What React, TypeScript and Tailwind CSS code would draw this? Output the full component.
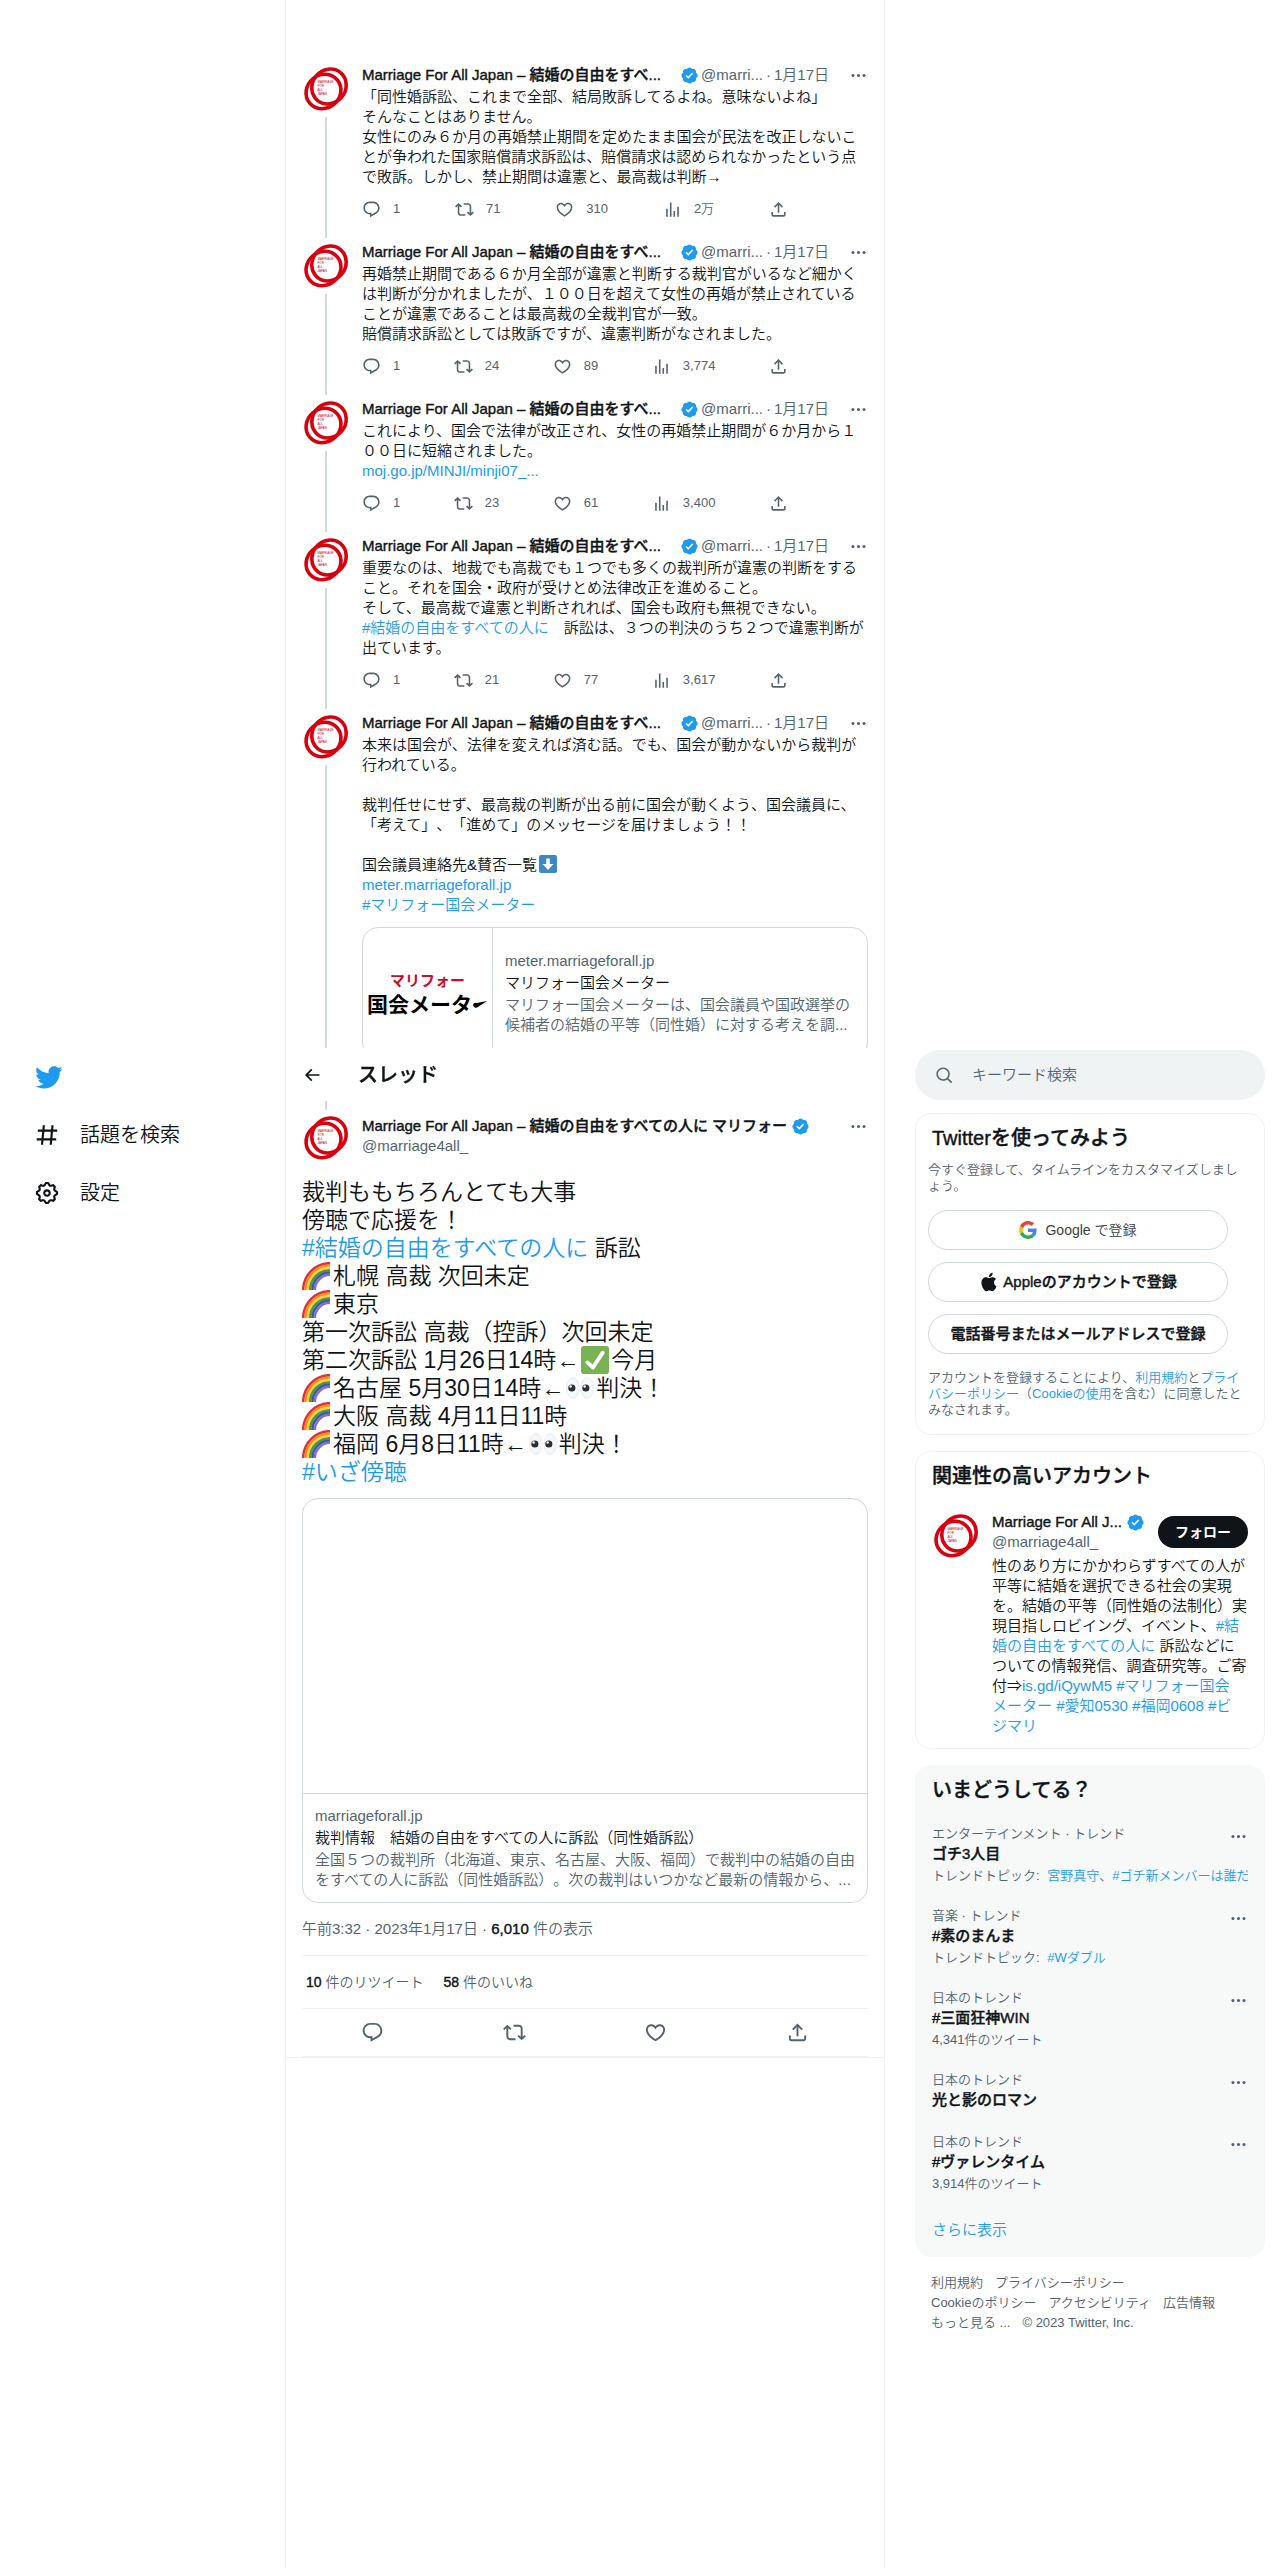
import type { ReactNode } from 'react';

interface IconProps {
  path: string;
  className?: string;
}

interface TweetData {
  body: ReactNode;
  replies: string;
  retweets: string;
  likes: string;
  views: string;
  card?: boolean;
}

interface Trend {
  category: string;
  title: string;
  count?: string;
  topics?: string[];
}

const paths = {
  reply:
    'M1.751 10c0-4.42 3.584-8 8.005-8h4.366c4.49 0 8.129 3.64 8.129 8.13 0 2.96-1.607 5.68-4.196 7.11l-8.054 4.46v-3.69h-.067c-4.49.1-8.183-3.51-8.183-8.01zm8.005-6c-3.317 0-6.005 2.69-6.005 6 0 3.37 2.77 6.08 6.138 6.01l.351-.01h1.761v2.3l5.087-2.81c1.951-1.08 3.163-3.13 3.163-5.36 0-3.39-2.744-6.13-6.129-6.13H9.756z',
  retweet:
    'M4.5 3.88l4.432 4.14-1.364 1.46L5.5 7.55V16c0 1.1.896 2 2 2H13v2H7.5c-2.209 0-4-1.79-4-4V7.55L1.432 9.48.068 8.02 4.5 3.88zM16.5 6H11V4h5.5c2.209 0 4 1.79 4 4v8.45l2.068-1.93 1.364 1.46-4.432 4.14-4.432-4.14 1.364-1.46 2.068 1.93V8c0-1.1-.896-2-2-2z',
  like:
    'M16.697 5.5c-1.222-.06-2.679.51-3.89 2.16l-.805 1.09-.806-1.09C9.984 6.01 8.526 5.44 7.304 5.5c-1.243.07-2.349.78-2.91 1.91-.552 1.12-.633 2.78.479 4.82 1.074 1.97 3.257 4.27 7.129 6.61 3.87-2.34 6.052-4.64 7.126-6.61 1.111-2.04 1.03-3.7.477-4.82-.561-1.13-1.666-1.84-2.908-1.91zm4.187 7.69c-1.351 2.48-4.001 5.12-8.379 7.67l-.503.3-.504-.3c-4.379-2.55-7.029-5.19-8.382-7.67-1.36-2.5-1.41-4.86-.514-6.67.887-1.79 2.647-2.91 4.601-3.01 1.651-.09 3.368.56 4.798 2.01 1.429-1.45 3.146-2.1 4.796-2.01 1.954.1 3.714 1.22 4.601 3.01.896 1.81.846 4.17-.514 6.67z',
  views: 'M8.75 21V3h2v18h-2zM18 21V8.5h2V21h-2zM4 21l.004-10h2L6 21H4zm9.248 0v-7h2v7h-2z',
  share:
    'M12 2.59l5.7 5.7-1.41 1.42L13 6.41V16h-2V6.41l-3.3 3.3-1.41-1.42L12 2.59zM21 15l-.02 3.51c0 1.38-1.12 2.49-2.5 2.49H5.5C4.11 21 3 19.88 3 18.5V15h2v3.5c0 .28.22.5.5.5h12.98c.28 0 .5-.22.5-.5L19 15h2z',
  more:
    'M3 12c0-1.1.9-2 2-2s2 .9 2 2-.9 2-2 2-2-.9-2-2zm9 2c1.1 0 2-.9 2-2s-.9-2-2-2-2 .9-2 2 .9 2 2 2zm7 0c1.1 0 2-.9 2-2s-.9-2-2-2-2 .9-2 2 .9 2 2 2z',
  back: 'M7.414 13l5.043 5.04-1.414 1.42L3.586 12l7.457-7.46 1.414 1.42L7.414 11H21v2H7.414z',
  search:
    'M10.25 3.75c-3.59 0-6.5 2.91-6.5 6.5s2.91 6.5 6.5 6.5c1.795 0 3.419-.726 4.596-1.904 1.178-1.177 1.904-2.801 1.904-4.596 0-3.59-2.91-6.5-6.5-6.5zm-8.5 6.5c0-4.694 3.806-8.5 8.5-8.5s8.5 3.806 8.5 8.5c0 1.986-.682 3.815-1.824 5.262l4.781 4.781-1.414 1.414-4.781-4.781c-1.447 1.142-3.276 1.824-5.262 1.824-4.694 0-8.5-3.806-8.5-8.5z',
  bird:
    'M23.643 4.937c-.835.37-1.732.62-2.675.733.962-.576 1.7-1.49 2.048-2.578-.9.534-1.897.922-2.958 1.13-.85-.904-2.06-1.47-3.4-1.47-2.572 0-4.658 2.086-4.658 4.66 0 .364.042.718.12 1.06-3.873-.195-7.304-2.05-9.602-4.868-.4.69-.63 1.49-.63 2.342 0 1.616.823 3.043 2.072 3.878-.764-.025-1.482-.234-2.11-.583v.06c0 2.257 1.605 4.14 3.737 4.568-.392.106-.803.162-1.227.162-.3 0-.593-.028-.877-.082.593 1.85 2.313 3.198 4.352 3.234-1.595 1.25-3.604 1.995-5.786 1.995-.376 0-.747-.022-1.112-.065 2.062 1.323 4.51 2.093 7.14 2.093 8.57 0 13.255-7.098 13.255-13.254 0-.2-.005-.402-.014-.602.91-.658 1.7-1.477 2.323-2.41z',
  hash:
    'M10.09 3.098L9.72 7h5.99l.39-4.089 1.99.187L17.72 7h3.78v2h-3.97l-.56 6h3.53v2h-3.72l-.38 4.089-1.99-.187.36-3.902H8.78l-.38 4.089-1.99-.187L6.77 17H2.5v-2h4.46l.56-6H3.5V7h4.21l.39-4.089 1.99.187zM14.96 15l.56-6H9.53l-.56 6h5.99z',
  settings:
    'M10.54 1.75h2.92l1.57 2.36c.11.17.32.25.53.21l2.53-.59 2.17 2.17-.58 2.54c-.05.2.04.41.21.53l2.36 1.57v2.92l-2.36 1.57c-.17.12-.26.33-.21.53l.58 2.54-2.17 2.17-2.53-.59c-.21-.04-.42.04-.53.21l-1.57 2.36h-2.92l-1.58-2.36c-.11-.17-.32-.25-.52-.21l-2.54.59-2.17-2.17.58-2.54c.05-.2-.03-.41-.21-.53l-2.35-1.57v-2.92L4.1 8.97c.18-.12.26-.33.21-.53L3.73 5.9 5.9 3.73l2.54.59c.2.04.41-.04.52-.21l1.58-2.36zm1.07 2l-.98 1.47C10.05 6.08 9 6.5 7.99 6.27l-1.46-.34-.6.6.33 1.46c.24 1.01-.18 2.07-1.05 2.64l-1.46.98v.78l1.46.98c.87.57 1.29 1.63 1.05 2.64l-.33 1.46.6.6 1.46-.34c1.01-.23 2.06.19 2.64 1.05l.98 1.47h.78l.97-1.47c.58-.86 1.63-1.28 2.65-1.05l1.45.34.61-.6-.34-1.46c-.23-1.01.18-2.07 1.05-2.64l1.47-.98v-.78l-1.47-.98c-.87-.57-1.28-1.63-1.05-2.64l.34-1.46-.61-.6-1.45.34c-1.02.23-2.07-.19-2.65-1.05l-.97-1.47h-.78zM12 10.5c-.83 0-1.5.67-1.5 1.5s.67 1.5 1.5 1.5c.83 0 1.5-.67 1.5-1.5s-.67-1.5-1.5-1.5zM8.5 12c0-1.93 1.56-3.5 3.5-3.5 1.93 0 3.5 1.57 3.5 3.5s-1.57 3.5-3.5 3.5c-1.94 0-3.5-1.57-3.5-3.5z',
  apple:
    'M16.365 1.43c0 1.14-.493 2.27-1.177 3.08-.744.9-1.99 1.57-2.987 1.57-.12 0-.23-.02-.3-.03-.01-.06-.04-.22-.04-.39 0-1.15.572-2.27 1.206-2.98.804-.94 2.142-1.64 3.248-1.68.03.13.05.28.05.43zm4.565 15.71c-.03.07-.463 1.58-1.518 3.12-.945 1.34-1.94 2.71-3.43 2.71-1.517 0-1.9-.88-3.63-.88-1.698 0-2.302.91-3.67.91-1.377 0-2.332-1.26-3.428-2.8-1.287-1.82-2.323-4.63-2.323-7.28 0-4.28 2.797-6.55 5.552-6.55 1.448 0 2.675.95 3.6.95.865 0 2.222-1.01 3.902-1.01.613 0 2.886.06 4.374 2.19-.13.09-2.383 1.37-2.383 4.19 0 3.26 2.854 4.42 2.955 4.45z',
};

function Icon({ path, className }: IconProps) {
  return (
    <svg viewBox="0 0 24 24" fill="currentColor" aria-hidden="true" className={`shrink-0 ${className ?? 'h-[19px] w-[19px]'}`}>
      <path d={path} />
    </svg>
  );
}

function VerifiedBadge() {
  return (
    <svg viewBox="0 0 22 22" fill="#1d9bf0" aria-hidden="true" className="h-[19px] w-[19px] shrink-0">
      <path d="M20.396 11c-.018-.646-.215-1.275-.57-1.816-.354-.54-.852-.972-1.438-1.246.223-.607.27-1.264.14-1.897-.131-.634-.437-1.218-.882-1.687-.47-.445-1.053-.75-1.687-.882-.633-.13-1.29-.083-1.897.14-.273-.587-.704-1.086-1.245-1.44S11.647 1.62 11 1.604c-.646.017-1.273.213-1.813.568s-.969.854-1.24 1.44c-.608-.223-1.267-.272-1.902-.14-.635.13-1.22.436-1.69.882-.445.47-.749 1.055-.878 1.688-.13.633-.08 1.29.144 1.896-.587.274-1.087.705-1.443 1.245-.356.54-.555 1.17-.574 1.817.02.647.218 1.276.574 1.817.356.54.856.972 1.443 1.245-.224.606-.274 1.263-.144 1.896.13.634.433 1.218.877 1.688.47.443 1.054.747 1.687.878.633.132 1.29.084 1.897-.136.274.586.705 1.084 1.246 1.439.54.354 1.17.551 1.816.569.647-.016 1.276-.213 1.817-.567s.972-.854 1.245-1.44c.604.239 1.266.296 1.903.164.636-.132 1.22-.447 1.68-.907.46-.46.776-1.044.908-1.681s.075-1.299-.165-1.903c.586-.274 1.084-.705 1.439-1.246.354-.54.551-1.17.569-1.816zM9.662 14.85l-3.429-3.428 1.293-1.302 2.072 2.072 4.4-4.794 1.347 1.246z" />
    </svg>
  );
}

function Avatar() {
  return (
    <svg viewBox="0 0 48 48" role="img" aria-label="Marriage For All Japan" className="h-12 w-12 shrink-0 rounded-full">
      <g fill="none" stroke="#d7000f" strokeWidth="3.6">
        <ellipse cx="21.5" cy="26.5" rx="18" ry="16.6" transform="rotate(-40 21.5 26.5)" />
        <ellipse cx="27" cy="21.5" rx="18" ry="16.6" transform="rotate(-50 27 21.5)" />
      </g>
      <g fill="#d7000f" fontSize="3" fontFamily="Liberation Sans">
        <text x="15.5" y="18">MARRIAGE</text>
        <text x="15.5" y="22">FOR</text>
        <text x="15.5" y="26">ALL</text>
        <text x="15.5" y="30">JAPAN</text>
      </g>
    </svg>
  );
}

function Rainbow() {
  const bands = ['#dd2e44', '#f4900c', '#ffcc4d', '#5c913b', '#226699', '#9266cc'];
  return (
    <svg viewBox="0 0 36 36" role="img" aria-label="虹" className="mr-[3px] inline-block h-7 w-7 align-bottom">
      {bands.map((color, i) => (
        <path
          key={color}
          d={`M${1.5 + i * 3} 36A${34.5 - i * 3} ${34.5 - i * 3} 0 0 1 36 ${1.5 + i * 3}`}
          fill="none"
          stroke={color}
          strokeWidth="3.2"
        />
      ))}
    </svg>
  );
}

function CheckMark() {
  return (
    <svg viewBox="0 0 36 36" role="img" aria-label="チェック" className="mx-0.5 inline-block h-7 w-7 align-bottom">
      <rect width="36" height="36" rx="4" fill="#77b255" />
      <path
        fill="#fff"
        d="M29.28 6.362c-1.156-.751-2.704-.422-3.458.736L14.936 23.877l-5.029-4.65c-1.014-.938-2.596-.875-3.533.138-.937 1.014-.875 2.596.139 3.533l7.209 6.666c.48.445 1.09.665 1.696.665.673 0 1.534-.282 2.099-1.139.332-.506 12.5-19.27 12.5-19.27.751-1.159.421-2.707-.737-3.458z"
      />
    </svg>
  );
}

function Eyes() {
  return (
    <svg viewBox="0 0 36 36" role="img" aria-label="目" className="mx-0.5 inline-block h-7 w-7 align-bottom">
      <ellipse cx="8.8" cy="18" rx="8" ry="13.5" fill="#f5f8fa" stroke="#e1e8ed" />
      <ellipse cx="27.2" cy="18" rx="8" ry="13.5" fill="#f5f8fa" stroke="#e1e8ed" />
      <circle cx="7.5" cy="18" r="4.6" fill="#292f33" />
      <circle cx="25.5" cy="18" r="4.6" fill="#292f33" />
      <circle cx="6" cy="16" r="1.6" fill="#fff" />
      <circle cx="24" cy="16" r="1.6" fill="#fff" />
    </svg>
  );
}

function DownArrow() {
  return (
    <svg viewBox="0 0 36 36" role="img" aria-label="下" className="ml-0.5 inline-block h-[18px] w-[18px] align-text-bottom">
      <rect width="36" height="36" rx="4" fill="#3b88c3" />
      <path fill="#fff" d="M14.5 7h7v11H29L18 30 7 18h7.5z" />
    </svg>
  );
}

function GoogleLogo() {
  return (
    <svg viewBox="0 0 48 48" aria-hidden="true" className="h-[18px] w-[18px]">
      <path fill="#EA4335" d="M24 9.5c3.54 0 6.71 1.22 9.21 3.6l6.85-6.85C35.9 2.38 30.47 0 24 0 14.62 0 6.51 5.38 2.56 13.22l7.98 6.19C12.43 13.72 17.74 9.5 24 9.5z" />
      <path fill="#4285F4" d="M46.98 24.55c0-1.57-.15-3.09-.38-4.55H24v9.02h12.94c-.58 2.96-2.26 5.48-4.78 7.18l7.73 6c4.51-4.18 7.09-10.36 7.09-17.65z" />
      <path fill="#FBBC05" d="M10.53 28.59c-.48-1.45-.76-2.99-.76-4.59s.27-3.14.76-4.59l-7.98-6.19C.92 16.46 0 20.12 0 24c0 3.88.92 7.54 2.56 10.78l7.97-6.19z" />
      <path fill="#34A853" d="M24 48c6.48 0 11.93-2.13 15.89-5.81l-7.73-6c-2.15 1.45-4.92 2.3-8.16 2.3-6.26 0-11.57-4.22-13.47-9.91l-7.98 6.19C6.51 42.62 14.62 48 24 48z" />
    </svg>
  );
}

function Link({ children }: { children: ReactNode }) {
  return (
    <a href="#" className="text-[#1d9bf0]">
      {children}
    </a>
  );
}

function Strong({ children, className = '' }: { children: ReactNode; className?: string }) {
  return (
    <span className={`font-medium text-[#0f1419] [-webkit-text-stroke:0.4px_currentColor] ${className}`}>{children}</span>
  );
}

function MoreButton({ className = '' }: { className?: string }) {
  return (
    <button type="button" aria-label="もっと見る" className={`flex h-5 shrink-0 items-center text-[#536471] ${className}`}>
      <Icon path={paths.more} />
    </button>
  );
}

function Action({ path, label, count }: { path: string; label: string; count?: string }) {
  return (
    <button type="button" aria-label={label} className="flex h-5 items-center">
      <Icon path={path} />
      {count && <span className="px-3 text-[13px]">{count}</span>}
    </button>
  );
}

function MeterCard() {
  return (
    <a href="#" className="mt-3 flex h-[132px] overflow-hidden rounded-2xl border border-[#cfd9de]">
      <div className="flex w-[130px] shrink-0 flex-col items-center justify-center border-r border-[#cfd9de] leading-6">
        <span className="text-[15px] font-bold text-[#c8102e]">マリフォー</span>
        <span className="flex items-center text-[21px] font-bold text-black">
          国会メータ
          <svg viewBox="0 0 16 10" aria-hidden="true" className="h-[10px] w-4">
            <path d="M1 5a3 3 0 0 1 4-2l10-2-9 6a3 3 0 0 1-5-2z" />
          </svg>
        </span>
      </div>
      <div className="flex min-w-0 flex-col justify-center gap-0.5 p-3 text-[#536471]">
        <span>meter.marriageforall.jp</span>
        <span className="text-[#0f1419]">マリフォー国会メーター</span>
        <span className="line-clamp-2">
          マリフォー国会メーターは、国会議員や国政選挙の候補者の結婚の平等（同性婚）に対する考えを調...
        </span>
      </div>
    </a>
  );
}

const tweets: TweetData[] = [
  {
    body: (
      <>
        「同性婚訴訟、これまで全部、結局敗訴してるよね。意味ないよね」
        <br />
        そんなことはありません。
        <br />
        女性にのみ６か月の再婚禁止期間を定めたまま国会が民法を改正しないことが争われた国家賠償請求訴訟は、賠償請求は認められなかったという点で敗訴。しかし、禁止期間は違憲と、最高裁は判断→
      </>
    ),
    replies: '1',
    retweets: '71',
    likes: '310',
    views: '2万',
  },
  {
    body: (
      <>
        再婚禁止期間である６か月全部が違憲と判断する裁判官がいるなど細かくは判断が分かれましたが、１００日を超えて女性の再婚が禁止されていることが違憲であることは最高裁の全裁判官が一致。
        <br />
        賠償請求訴訟としては敗訴ですが、違憲判断がなされました。
      </>
    ),
    replies: '1',
    retweets: '24',
    likes: '89',
    views: '3,774',
  },
  {
    body: (
      <>
        これにより、国会で法律が改正され、女性の再婚禁止期間が６か月から１００日に短縮されました。
        <br />
        <Link>moj.go.jp/MINJI/minji07_...</Link>
      </>
    ),
    replies: '1',
    retweets: '23',
    likes: '61',
    views: '3,400',
  },
  {
    body: (
      <>
        重要なのは、地裁でも高裁でも１つでも多くの裁判所が違憲の判断をすること。それを国会・政府が受けとめ法律改正を進めること。
        <br />
        そして、最高裁で違憲と判断されれば、国会も政府も無視できない。
        <br />
        <Link>#結婚の自由をすべての人に</Link>　訴訟は、３つの判決のうち２つで違憲判断が出ています。
      </>
    ),
    replies: '1',
    retweets: '21',
    likes: '77',
    views: '3,617',
  },
  {
    body: (
      <>
        本来は国会が、法律を変えれば済む話。でも、国会が動かないから裁判が行われている。
        <br />
        <br />
        裁判任せにせず、最高裁の判断が出る前に国会が動くよう、国会議員に、「考えて」、「進めて」のメッセージを届けましょう！！
        <br />
        <br />
        国会議員連絡先&amp;賛否一覧
        <DownArrow />
        <br />
        <Link>meter.marriageforall.jp</Link>
        <br />
        <Link>#マリフォー国会メーター</Link>
      </>
    ),
    replies: '1',
    retweets: '20',
    likes: '65',
    views: '3,250',
    card: true,
  },
];

const trends: Trend[] = [
  { category: 'エンターテインメント · トレンド', title: 'ゴチ3人目', topics: ['宮野真守', '#ゴチ新メンバーは誰だ'] },
  { category: '音楽 · トレンド', title: '#素のまんま', topics: ['#Wダブル'] },
  { category: '日本のトレンド', title: '#三面狂神WIN', count: '4,341件のツイート' },
  { category: '日本のトレンド', title: '光と影のロマン' },
  { category: '日本のトレンド', title: '#ヴァレンタイム', count: '3,914件のツイート' },
];

function Tweet({ tweet }: { tweet: TweetData }) {
  return (
    <article className="flex gap-3 px-4">
      <div className="flex flex-col items-center">
        <Avatar />
        <div className="my-1 w-0.5 flex-1 bg-[#cfd9de]" />
      </div>
      <div className="min-w-0 flex-1 pb-[23px]">
        <div className="flex items-center whitespace-nowrap text-[#536471]">
          <Strong className="min-w-0 flex-1 truncate">Marriage For All Japan – 結婚の自由をすべ...</Strong>
          <VerifiedBadge />
          <span className="ml-0.5">@marri...</span>
          <span className="px-[3px]">·</span>
          <time>1月17日</time>
          <MoreButton className="ml-5" />
        </div>
        <div className="mt-0.5 break-words">{tweet.body}</div>
        {tweet.card && <MeterCard />}
        <div className="mt-3 flex max-w-[426px] justify-between text-[#536471]">
          <Action path={paths.reply} label="返信" count={tweet.replies} />
          <Action path={paths.retweet} label="リツイート" count={tweet.retweets} />
          <Action path={paths.like} label="いいね" count={tweet.likes} />
          <Action path={paths.views} label="表示" count={tweet.views} />
          <Action path={paths.share} label="共有" />
        </div>
      </div>
    </article>
  );
}

function MainTweet() {
  return (
    <article className="border-b border-[#eff3f4] px-4">
      <div className="flex gap-3">
        <Avatar />
        <div className="min-w-0 flex-1 pt-0.5">
          <div className="flex items-center whitespace-nowrap">
            <Strong className="mr-1 truncate">Marriage For All Japan – 結婚の自由をすべての人に マリフォー</Strong>
            <VerifiedBadge />
            <MoreButton className="ml-auto" />
          </div>
          <div className="text-[#536471]">@marriage4all_</div>
        </div>
      </div>

      <div className="mt-4 text-[23px] leading-7">
        裁判ももちろんとても大事
        <br />
        傍聴で応援を！
        <br />
        <Link>#結婚の自由をすべての人に</Link> 訴訟
        <br />
        <Rainbow />
        札幌 高裁 次回未定
        <br />
        <Rainbow />
        東京
        <br />
        第一次訴訟 高裁（控訴）次回未定
        <br />
        第二次訴訟 1月26日14時←
        <CheckMark />
        今月
        <br />
        <Rainbow />
        名古屋 5月30日14時←
        <Eyes />
        判決！
        <br />
        <Rainbow />
        大阪 高裁 4月11日11時
        <br />
        <Rainbow />
        福岡 6月8日11時←
        <Eyes />
        判決！
        <br />
        <Link>#いざ傍聴</Link>
      </div>

      <a href="#" className="mt-3 block overflow-hidden rounded-2xl border border-[#cfd9de]">
        <div className="aspect-[191/100] border-b border-[#cfd9de]" />
        <div className="flex flex-col gap-0.5 p-3 text-[#536471]">
          <span>marriageforall.jp</span>
          <span className="text-[#0f1419]">裁判情報　結婚の自由をすべての人に訴訟（同性婚訴訟）</span>
          <span className="line-clamp-2">
            全国５つの裁判所（北海道、東京、名古屋、大阪、福岡）で裁判中の結婚の自由をすべての人に訴訟（同性婚訴訟）。次の裁判はいつかなど最新の情報から、...
          </span>
        </div>
      </a>

      <div className="my-4 text-[#536471]">
        <time>午前3:32 · 2023年1月17日</time> · <Strong>6,010</Strong> 件の表示
      </div>
      <div className="flex gap-5 border-y border-[#eff3f4] px-1 py-4 text-sm text-[#536471]">
        <a href="#">
          <Strong>10</Strong> 件のリツイート
        </a>
        <a href="#">
          <Strong>58</Strong> 件のいいね
        </a>
      </div>
      <div className="flex h-12 items-center justify-around border-b border-[#eff3f4] text-[#536471]">
        <button type="button" aria-label="返信">
          <Icon path={paths.reply} className="h-[23px] w-[23px]" />
        </button>
        <button type="button" aria-label="リツイート">
          <Icon path={paths.retweet} className="h-[23px] w-[23px]" />
        </button>
        <button type="button" aria-label="いいね">
          <Icon path={paths.like} className="h-[23px] w-[23px]" />
        </button>
        <button type="button" aria-label="共有">
          <Icon path={paths.share} className="h-[23px] w-[23px]" />
        </button>
      </div>
    </article>
  );
}

function SignupPanel() {
  const buttonClass = 'flex h-10 w-full max-w-[300px] items-center justify-center rounded-full border border-[#cfd9de]';
  return (
    <section className="mt-[13px] rounded-2xl border border-[#eff3f4] pt-3 pr-5 pb-4 pl-3 text-[13px] leading-4 text-[#536471]">
      <h2 className="px-1 text-xl leading-6">
        <Strong>Twitterを使ってみよう</Strong>
      </h2>
      <p className="mt-3">今すぐ登録して、タイムラインをカスタマイズしましょう。</p>
      <div className="mt-4 flex flex-col gap-3 text-[15px]">
        <button type="button" className={`${buttonClass} gap-2 text-sm text-[#3c4043]`}>
          <GoogleLogo />
          Google で登録
        </button>
        <button type="button" className={`${buttonClass} gap-1 text-[#0f1419]`}>
          <Icon path={paths.apple} className="h-5 w-5" />
          <Strong>Appleのアカウントで登録</Strong>
        </button>
        <button type="button" className={buttonClass}>
          <Strong>電話番号またはメールアドレスで登録</Strong>
        </button>
      </div>
      <p className="mt-4">
        アカウントを登録することにより、<Link>利用規約</Link>と<Link>プライバシーポリシー</Link>（<Link>Cookieの使用</Link>を含む）に同意したとみなされます。
      </p>
    </section>
  );
}

function RelatedPanel() {
  return (
    <section className="mt-4 rounded-2xl border border-[#eff3f4] px-4 py-3">
      <h2 className="text-xl leading-6">
        <Strong>関連性の高いアカウント</Strong>
      </h2>
      <div className="mt-6 flex gap-3">
        <Avatar />
        <div className="min-w-0 flex-1">
          <div className="flex items-center justify-between">
            <div className="min-w-0">
              <div className="flex items-center gap-1 whitespace-nowrap">
                <Strong>Marriage For All J...</Strong>
                <VerifiedBadge />
              </div>
              <div className="text-[#536471]">@marriage4all_</div>
            </div>
            <button type="button" className="h-8 shrink-0 rounded-full bg-[#0f1419] px-[17px] text-sm font-bold text-white">
              フォロー
            </button>
          </div>
          <p className="mt-1">
            性のあり方にかかわらずすべての人が平等に結婚を選択できる社会の実現を。結婚の平等（同性婚の法制化）実現目指しロビイング、イベント、
            <Link>#結婚の自由をすべての人に</Link> 訴訟などについての情報発信、調査研究等。ご寄付⇒
            <Link>is.gd/iQywM5</Link>{' '}
            <Link>
              #マリフォー国会
              <br />
              メーター
            </Link>{' '}
            <Link>#愛知0530</Link> <Link>#福岡0608</Link>{' '}
            <Link>
              #ビ
              <br />
              ジマリ
            </Link>
          </p>
        </div>
      </div>
    </section>
  );
}

function TrendsPanel() {
  return (
    <section className="mt-4 rounded-2xl border border-[#f7f9f9] bg-[#f7f9f9] px-4 pt-3">
      <h2 className="mb-3 text-xl leading-6">
        <Strong>いまどうしてる？</Strong>
      </h2>
      {trends.map((trend) => (
        <div key={trend.title} className="py-3 text-[13px] leading-4 text-[#536471]">
          <div className="flex h-4 items-start justify-between">
            <span>{trend.category}</span>
            <MoreButton />
          </div>
          <div className="mt-0.5 text-[15px] leading-5">
            <Strong>{trend.title}</Strong>
          </div>
          {trend.count && <div className="mt-1">{trend.count}</div>}
          {trend.topics && (
            <div className="mt-1 overflow-hidden whitespace-nowrap">
              <span className="mr-1">トレンドトピック: </span>
              {trend.topics.map((topic, i) => (
                <span key={topic}>
                  {i > 0 && '、'}
                  <Link>{topic}</Link>
                </span>
              ))}
            </div>
          )}
        </div>
      ))}
      <a href="#" className="block py-4 text-[#1d9bf0]">
        さらに表示
      </a>
    </section>
  );
}

export default function App() {
  return (
    <div className="relative flex min-h-screen bg-white font-['Liberation_Sans','Noto_Sans_CJK_JP',sans-serif] text-[15px] leading-5 font-[350] text-[#0f1419] [text-spacing-trim:space-all]">
      <nav className="flex-1 pt-[1048px] pl-[34px] text-xl">
        <a href="#" aria-label="Twitter" className="flex h-[58px] items-center text-[#1d9bf0]">
          <Icon path={paths.bird} className="h-[29px] w-[29px]" />
        </a>
        <a href="#" className="flex h-[58px] items-center gap-5">
          <Icon path={paths.hash} className="h-[26px] w-[26px]" />
          話題を検索
        </a>
        <a href="#" className="flex h-[58px] items-center gap-5">
          <Icon path={paths.settings} className="h-[26px] w-[26px]" />
          設定
        </a>
      </nav>

      <main className="relative w-full max-w-[600px] border-x border-[#eff3f4] pt-[65px]">
        {tweets.map((tweet, index) => (
          <Tweet key={index} tweet={tweet} />
        ))}
        <MainTweet />
        <header className="absolute inset-x-0 top-[1048px] flex h-[53px] items-center bg-white/95 px-4 backdrop-blur-md">
          <button type="button" aria-label="戻る" className="w-14">
            <Icon path={paths.back} className="h-5 w-5" />
          </button>
          <h1 className="text-xl leading-6">
            <Strong>スレッド</Strong>
          </h1>
        </header>
      </main>

      <aside className="mr-[19px] ml-[30px] w-[350px] shrink-0 pt-[1050px]">
        <label className="flex h-[50px] items-center gap-[18px] rounded-full bg-[#eff3f4] px-5 text-[#536471]">
          <Icon path={paths.search} />
          <input type="text" aria-label="キーワード検索" placeholder="キーワード検索" className="min-w-0 flex-1 bg-transparent outline-none placeholder:text-[#536471]" />
        </label>
        <SignupPanel />
        <RelatedPanel />
        <TrendsPanel />
        <footer className="flex flex-wrap gap-x-3 px-4 pt-4 text-[13px] text-[#536471]">
          <a href="#">利用規約</a>
          <a href="#" className="mr-20">プライバシーポリシー</a>
          <a href="#">Cookieのポリシー</a>
          <a href="#">アクセシビリティ</a>
          <a href="#">広告情報</a>
          <button type="button">もっと見る ...</button>
          <span>© 2023 Twitter, Inc.</span>
        </footer>
      </aside>
    </div>
  );
}
